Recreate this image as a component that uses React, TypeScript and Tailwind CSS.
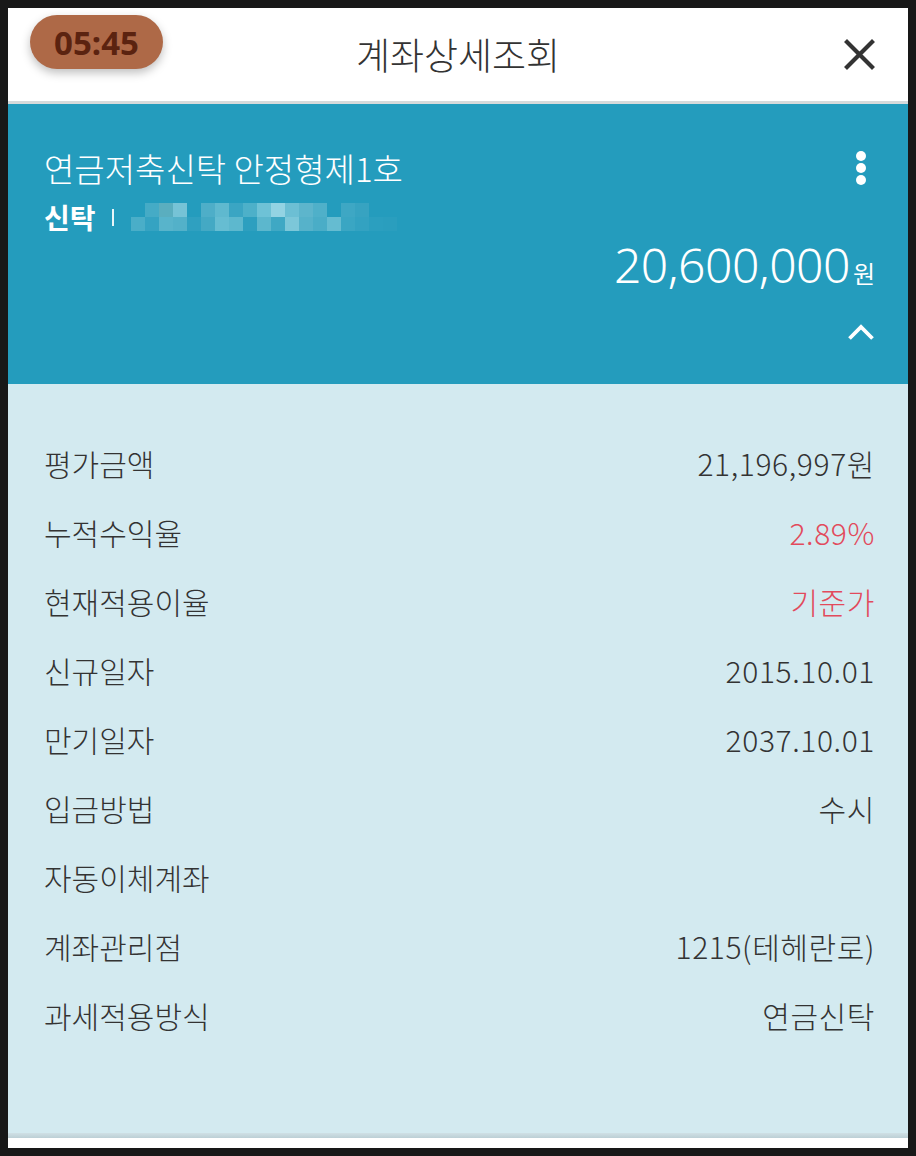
import React from 'react';

const FONT = 'font-["Noto_Sans_CJK_KR","Noto_Sans",sans-serif]';

const rows: { label: string; value: string; red?: boolean }[] = [
	{ label: '평가금액', value: '21,196,997원' },
	{ label: '누적수익율', value: '2.89%', red: true },
	{ label: '현재적용이율', value: '기준가', red: true },
	{ label: '신규일자', value: '2015.10.01' },
	{ label: '만기일자', value: '2037.10.01' },
	{ label: '입금방법', value: '수시' },
	{ label: '자동이체계좌', value: '' },
	{ label: '계좌관리점', value: '1215(테헤란로)' },
	{ label: '과세적용방식', value: '연금신탁' },
];

// masked account number, two rows of mosaic blocks
const mosaic = [
	[
		'bg-transparent', 'bg-[#45abc6]', 'bg-[#5aaebf]', 'bg-[#76c3d6]', 'bg-transparent',
		'bg-[#4eaec8]', 'bg-[#5fb9cf]', 'bg-[#3aa5c3]', 'bg-[#4db0c9]', 'bg-[#6ec2d6]',
		'bg-[#93d3e3]', 'bg-[#6cbfd4]', 'bg-[#5db5cc]', 'bg-[#4fb0c9]', 'bg-transparent',
		'bg-[#3ea7c4]', 'bg-[#37a3c1]', 'bg-transparent', 'bg-transparent',
	],
	[
		'bg-[#4aaec8]', 'bg-[#35a3c2]', 'bg-[#58b4cb]', 'bg-[#53b1c9]', 'bg-[#2fa0c0]',
		'bg-[#44a9c4]', 'bg-[#66bdd2]', 'bg-[#5db8ce]', 'bg-[#2d9fbf]', 'bg-[#5cb7cd]',
		'bg-[#3fa8c4]', 'bg-[#7cc7d9]', 'bg-[#56b2ca]', 'bg-[#4aadc7]', 'bg-[#65bcd1]',
		'bg-[#3aa6c3]', 'bg-[#33a2c1]', 'bg-[#2b9fbf]', 'bg-[#2a9ebe]',
	],
];

export default function App() {
	return (
		<div className={`${FONT} bg-[#181818] p-[8px] w-[916px] h-[1156px]`}>
			<div className="relative flex h-[1140px] flex-col bg-white">
				{/* floating timer */}
				<div className="absolute left-[22px] top-[7px] flex h-[54px] w-[133px] items-center justify-center rounded-full bg-[#ae6947] shadow-[0_4px_10px_rgba(0,0,0,0.25)]">
					<span className="text-[33px] font-bold leading-none text-[#5b2310] font-['Noto_Sans',sans-serif]">05:45</span>
				</div>

				{/* header */}
				<div className="flex h-[96px] items-center border-b-[3px] border-[#d6dadb] bg-white">
					<div className="w-[140px]" />
					<div className="flex-1 text-center text-[37px] font-light leading-none text-[#333333]">계좌상세조회</div>
					<div className="flex w-[140px] justify-end pr-[33px]">
						<svg width="31" height="31" viewBox="0 0 31 31" fill="none">
							<path d="M3 3L28 28M28 3L3 28" stroke="#333333" strokeWidth="4.2" strokeLinecap="square" />
						</svg>
					</div>
				</div>

				{/* account summary */}
				<div className="flex h-[280px] flex-col bg-[#249cbd] pl-[36px] pr-[33px] pt-[43px] text-white">
					<div className="flex h-[42px] items-center justify-between">
						<span className="text-[33px] font-light leading-none">연금저축신탁 안정형제1호</span>
						<svg width="12" height="36" viewBox="0 0 12 36" className="mr-[8px]">
							<circle cx="6" cy="6" r="5" fill="white" />
							<circle cx="6" cy="18" r="5" fill="white" />
							<circle cx="6" cy="30" r="5" fill="white" />
						</svg>
					</div>
					<div className="mt-[10px] flex h-[36px] items-center">
						<span className="text-[28px] font-bold leading-none">신탁</span>
						<span className="ml-[16px] mr-[17px] h-[17px] w-[2px] bg-white/90" />
						<div className="flex flex-col">
							{mosaic.map((line, i) => (
								<div key={i} className="flex">
									{line.map((c, j) => (
										<div key={j} className={`h-[14px] w-[14px] ${c}`} />
									))}
								</div>
							))}
						</div>
					</div>
					<div className="mt-[4px] flex h-[56px] items-baseline justify-end pt-[2px]">
						<span className="text-[48px] font-light leading-none tracking-[-0.5px] font-['Noto_Sans',sans-serif]">20,600,000</span>
						<span className="ml-[3px] text-[24px] leading-none">원</span>
					</div>
					<div className="mt-[27px] flex h-[20px] items-center justify-end">
						<svg width="28" height="17" viewBox="0 0 28 17" fill="none">
							<path d="M2.5 14.5L14 3L25.5 14.5" stroke="white" strokeWidth="3.8" />
						</svg>
					</div>
				</div>

				{/* detail rows */}
				<div className="flex flex-col bg-[#d3eaf0] pl-[36px] pr-[33px] pt-[44px] pb-[84px]">
					{rows.map(row => (
						<div key={row.label} className="flex h-[69px] items-center justify-between text-[30px] font-light leading-none">
							<span className="text-[#333333]">{row.label}</span>
							<span className={`tracking-[0.6px] ${row.red ? 'text-[#e24a5c]' : 'text-[#333333]'}`}>{row.value}</span>
						</div>
					))}
				</div>
				<div className="h-[5px] bg-gradient-to-b from-[#cfe0e5] to-[#bccfd5]" />
				<div className="flex-1 bg-white" />
			</div>
		</div>
	);
}
